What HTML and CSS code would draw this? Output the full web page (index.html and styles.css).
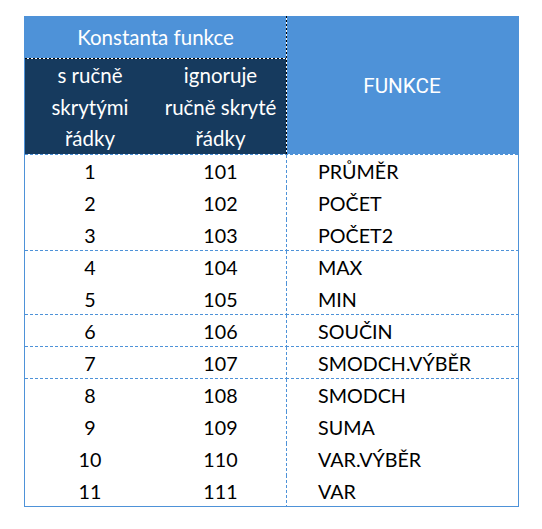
FILE: index.html
```html
<!DOCTYPE html>
<html lang="cs">
<head>
<meta charset="utf-8">
<title>Konstanta funkce</title>
<link rel="stylesheet" href="styles.css">
</head>
<body>
<div class="sheet">
  <div class="hd-group">Konstanta funkce</div>
  <div class="hd-funkce">FUNKCE</div>
  <div class="hd-sub">s ručně<br>skrytými<br>řádky</div>
  <div class="hd-sub">ignoruje<br>ručně skryté<br>řádky</div>
  <div class="hline"></div>

  <div class="c num">1</div><div class="c num">101</div><div class="c fn">PRŮMĚR</div>
  <div class="c num">2</div><div class="c num">102</div><div class="c fn">POČET</div>
  <div class="c num sep">3</div><div class="c num sep">103</div><div class="c fn sep">POČET2</div>
  <div class="c num">4</div><div class="c num">104</div><div class="c fn">MAX</div>
  <div class="c num sep">5</div><div class="c num sep">105</div><div class="c fn sep">MIN</div>
  <div class="c num sep">6</div><div class="c num sep">106</div><div class="c fn sep">SOUČIN</div>
  <div class="c num sep">7</div><div class="c num sep">107</div><div class="c fn sep">SMODCH.VÝBĚR</div>
  <div class="c num">8</div><div class="c num">108</div><div class="c fn">SMODCH</div>
  <div class="c num">9</div><div class="c num">109</div><div class="c fn">SUMA</div>
  <div class="c num">10</div><div class="c num">110</div><div class="c fn">VAR.VÝBĚR</div>
  <div class="c num last">11</div><div class="c num last">111</div><div class="c fn last">VAR</div>
</div>
</body>
</html>
```

FILE: styles.css
```css
html, body {
  margin: 0;
  padding: 0;
  background: #ffffff;
}

body {
  font-family: Lato, "Noto Sans", "DejaVu Sans", sans-serif;
  color: #000000;
}

.sheet {
  margin: 16px 0 0 24px;
  width: 493px;
  display: grid;
  grid-template-columns: 130px 131px 232px;
  border-left: 1px solid #4e92d8;
  border-right: 1px solid #4e92d8;
  border-bottom: 1px solid #4e92d8;
}

.hd-group {
  grid-column: 1 / 3;
  grid-row: 1;
  height: 43px;
  box-sizing: border-box;
  padding-bottom: 2px;
  display: flex;
  align-items: center;
  justify-content: center;
  color: #ffffff;
  font-size: 20.5px;
  background:
    repeating-linear-gradient(90deg, #000 0 2px, #fff 2px 4px) left bottom / 100% 1px no-repeat,
    #4e92d8;
}

.hd-funkce {
  grid-column: 3;
  grid-row: 1 / 3;
  display: flex;
  align-items: center;
  justify-content: center;
  color: #ffffff;
  font-family: Roboto, "Liberation Sans", sans-serif;
  font-size: 20.7px;
  padding-top: 1px;
  background:
    repeating-linear-gradient(180deg, #000 0 2px, #fff 2px 4px) left top / 1px 100% no-repeat,
    #4e92d8;
}

.hd-sub {
  grid-row: 2;
  height: 95px;
  box-sizing: border-box;
  padding-top: 1px;
  background: #163a5e;
  color: #ffffff;
  font-size: 20.5px;
  line-height: 31.6px;
  text-align: center;
}

.hline {
  grid-column: 1 / -1;
  height: 1px;
  background: repeating-linear-gradient(90deg, #4e92d8 0 3px, #fff 3px 5px);
}

.c {
  height: 32px;
  box-sizing: border-box;
  padding-top: 3px;
  font-size: 19.7px;
  line-height: 28px;
}

.c.last {
  height: 31px;
}

.num {
  text-align: center;
}

.fn {
  padding-left: 32px;
  background:
    repeating-linear-gradient(180deg, #4e92d8 0 3px, #fff 3px 5px) left top / 1px 100% no-repeat;
}

.num.sep {
  background:
    repeating-linear-gradient(90deg, #4e92d8 0 3px, #fff 3px 5px) left bottom / 100% 1px no-repeat;
}

.fn.sep {
  background:
    repeating-linear-gradient(180deg, #4e92d8 0 3px, #fff 3px 5px) left top / 1px 100% no-repeat,
    repeating-linear-gradient(90deg, #4e92d8 0 3px, #fff 3px 5px) left bottom / 100% 1px no-repeat;
}
```
